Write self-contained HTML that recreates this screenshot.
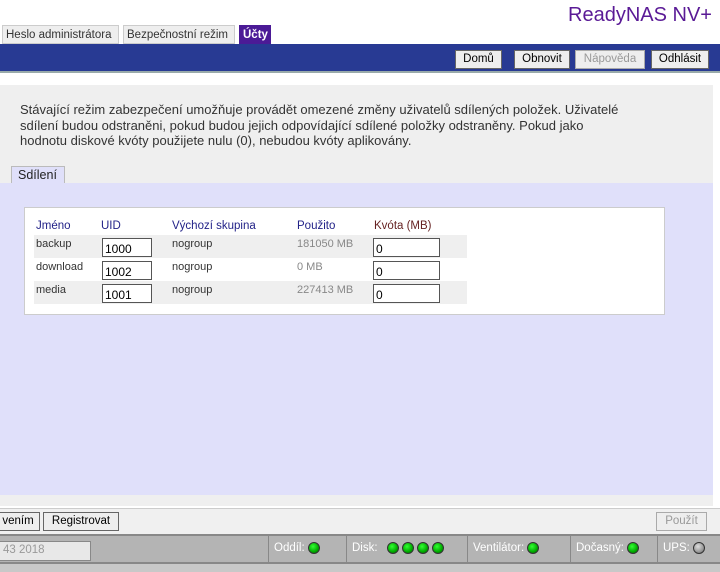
<!DOCTYPE html>
<html><head><meta charset="utf-8"><style>
*{margin:0;padding:0;box-sizing:border-box}
body{width:720px;height:572px;overflow:hidden;background:#fff;font-family:"Liberation Sans",sans-serif;position:relative;font-size:12px}
.a{position:absolute}
.tab{position:absolute;top:25px;height:19px;background:#eee;border:1px solid #ccc;font-size:11.5px;color:#333;padding:3px 3px 0;white-space:nowrap}
.btn{position:absolute;height:19px;background:#eee;border:1px solid #666;font-size:11.5px;color:#000;text-align:center;padding-top:2px}
.led{display:inline-block;width:12px;height:12px;border-radius:50%;background:radial-gradient(circle at 40% 35%,#3f3,#0a0 60%,#060);border:1px solid #333;vertical-align:middle;margin-left:3px}
td{font-size:11px;color:#333;height:23px;vertical-align:top;padding-top:3px}
input{width:50px;height:19px;border:1px solid #555;font-size:12px;padding:2px 2px 0;font-family:"Liberation Sans",sans-serif}
</style></head><body>
<div class="a" style="right:8px;top:4px;font-size:20px;color:#5a1a96">ReadyNAS NV+</div>
<div class="tab" style="left:2px;width:117px">Heslo administrátora</div>
<div class="tab" style="left:123px;width:112px">Bezpečnostní režim</div>
<div class="tab" style="left:239px;width:32px;background:#4b1a96;color:#fff;font-weight:bold;border-color:#4b1a96">Účty</div>
<div class="a" style="left:0;top:44px;width:720px;height:29px;background:#283a93;border-bottom:2px solid #9aa"></div>
<div class="btn" style="left:455px;top:50px;width:47px">Domů</div>
<div class="btn" style="left:514px;top:50px;width:56px">Obnovit</div>
<div class="btn" style="left:575px;top:50px;width:70px;color:#999;border-color:#aaa">Nápověda</div>
<div class="btn" style="left:651px;top:50px;width:58px">Odhlásit</div>
<div class="a" style="left:0;top:85px;width:713px;height:421px;background:#efefef"></div>
<div class="a" style="left:20px;top:102px;width:612px;font-size:13px;line-height:15.5px;color:#333">Stávající režim zabezpečení umožňuje provádět omezené změny uživatelů sdílených položek. Uživatelé sdílení budou odstraněni, pokud budou jejich odpovídající sdílené položky odstraněny. Pokud jako hodnotu diskové kvóty použijete nulu (0), nebudou kvóty aplikovány.</div>
<div class="a" style="left:11px;top:166px;width:54px;height:18px;background:#e0e0fa;border:1px solid #bbb;border-bottom:none;font-size:12.5px;padding:1px 0 0 6px;color:#222">Sdílení</div>
<div class="a" style="left:0;top:183px;width:713px;height:312px;background:#e0e0fa"></div>
<div class="a" style="left:24px;top:207px;width:641px;height:108px;background:#fff;border:1px solid #ccc"></div>
<div class="a" style="left:34px;top:220px;font-size:11.5px;color:#228">
<span class="a" style="left:2px">Jméno</span><span class="a" style="left:67px">UID</span><span class="a" style="left:138px;white-space:nowrap">Výchozí skupina</span><span class="a" style="left:263px">Použito</span><span class="a" style="left:340px;white-space:nowrap;color:#622">Kvóta (MB)</span></div>
<table class="a" style="left:34px;top:235px;width:433px;border-collapse:collapse">
<tr style="background:#efefef"><td style="width:68px;padding-left:2px">backup</td><td style="width:70px"><input value="1000"></td><td style="width:125px">nogroup</td><td style="width:76px;color:#888">181050 MB</td><td><input value="0" style="width:67px"></td></tr>
<tr><td style="padding-left:2px">download</td><td><input value="1002"></td><td>nogroup</td><td style="color:#888">0 MB</td><td><input value="0" style="width:67px"></td></tr>
<tr style="background:#efefef"><td style="padding-left:2px">media</td><td><input value="1001"></td><td>nogroup</td><td style="color:#888">227413 MB</td><td><input value="0" style="width:67px"></td></tr>
</table>
<div class="a" style="left:0;top:508px;width:720px;height:26px;background:#f0f0f0;border-top:1px solid #ccc"></div>
<div class="btn" style="left:-4px;top:512px;width:44px">vením</div>
<div class="btn" style="left:43px;top:512px;width:76px">Registrovat</div>
<div class="btn" style="left:656px;top:512px;width:51px;color:#999;border-color:#aaa">Použít</div>
<div class="a" style="left:0;top:534px;width:720px;height:30px;background:#b4b4b4;border-top:2px solid #888;border-bottom:2px solid #888;color:#fff;font-size:11.5px">
<div class="a" style="left:-2px;top:5px;width:93px;height:20px;background:#e8e8e8;border:1px solid #888;color:#999;padding:2px 0 0 4px">43 2018</div>
<div class="a" style="left:268px;top:0;height:26px;border-left:1px solid #888;padding:6px 0 0 5px;white-space:nowrap">Oddíl:<span class="led"></span></div>
<div class="a" style="left:346px;top:0;height:26px;border-left:1px solid #888;padding:6px 0 0 5px;white-space:nowrap">Disk: &nbsp;<span class="led"></span><span class="led"></span><span class="led"></span><span class="led"></span></div>
<div class="a" style="left:467px;top:0;height:26px;border-left:1px solid #888;padding:6px 0 0 5px;white-space:nowrap">Ventilátor:<span class="led"></span></div>
<div class="a" style="left:570px;top:0;height:26px;border-left:1px solid #888;padding:6px 0 0 5px;white-space:nowrap">Dočasný:<span class="led"></span></div>
<div class="a" style="left:657px;top:0;height:26px;border-left:1px solid #888;padding:6px 0 0 5px;white-space:nowrap">UPS:<span class="led" style="background:radial-gradient(circle at 40% 35%,#ddd,#999 60%,#666)"></span></div>
</div>
<div class="a" style="left:0;top:564px;width:720px;height:8px;background:#c8c8c8"></div>
</body></html>
